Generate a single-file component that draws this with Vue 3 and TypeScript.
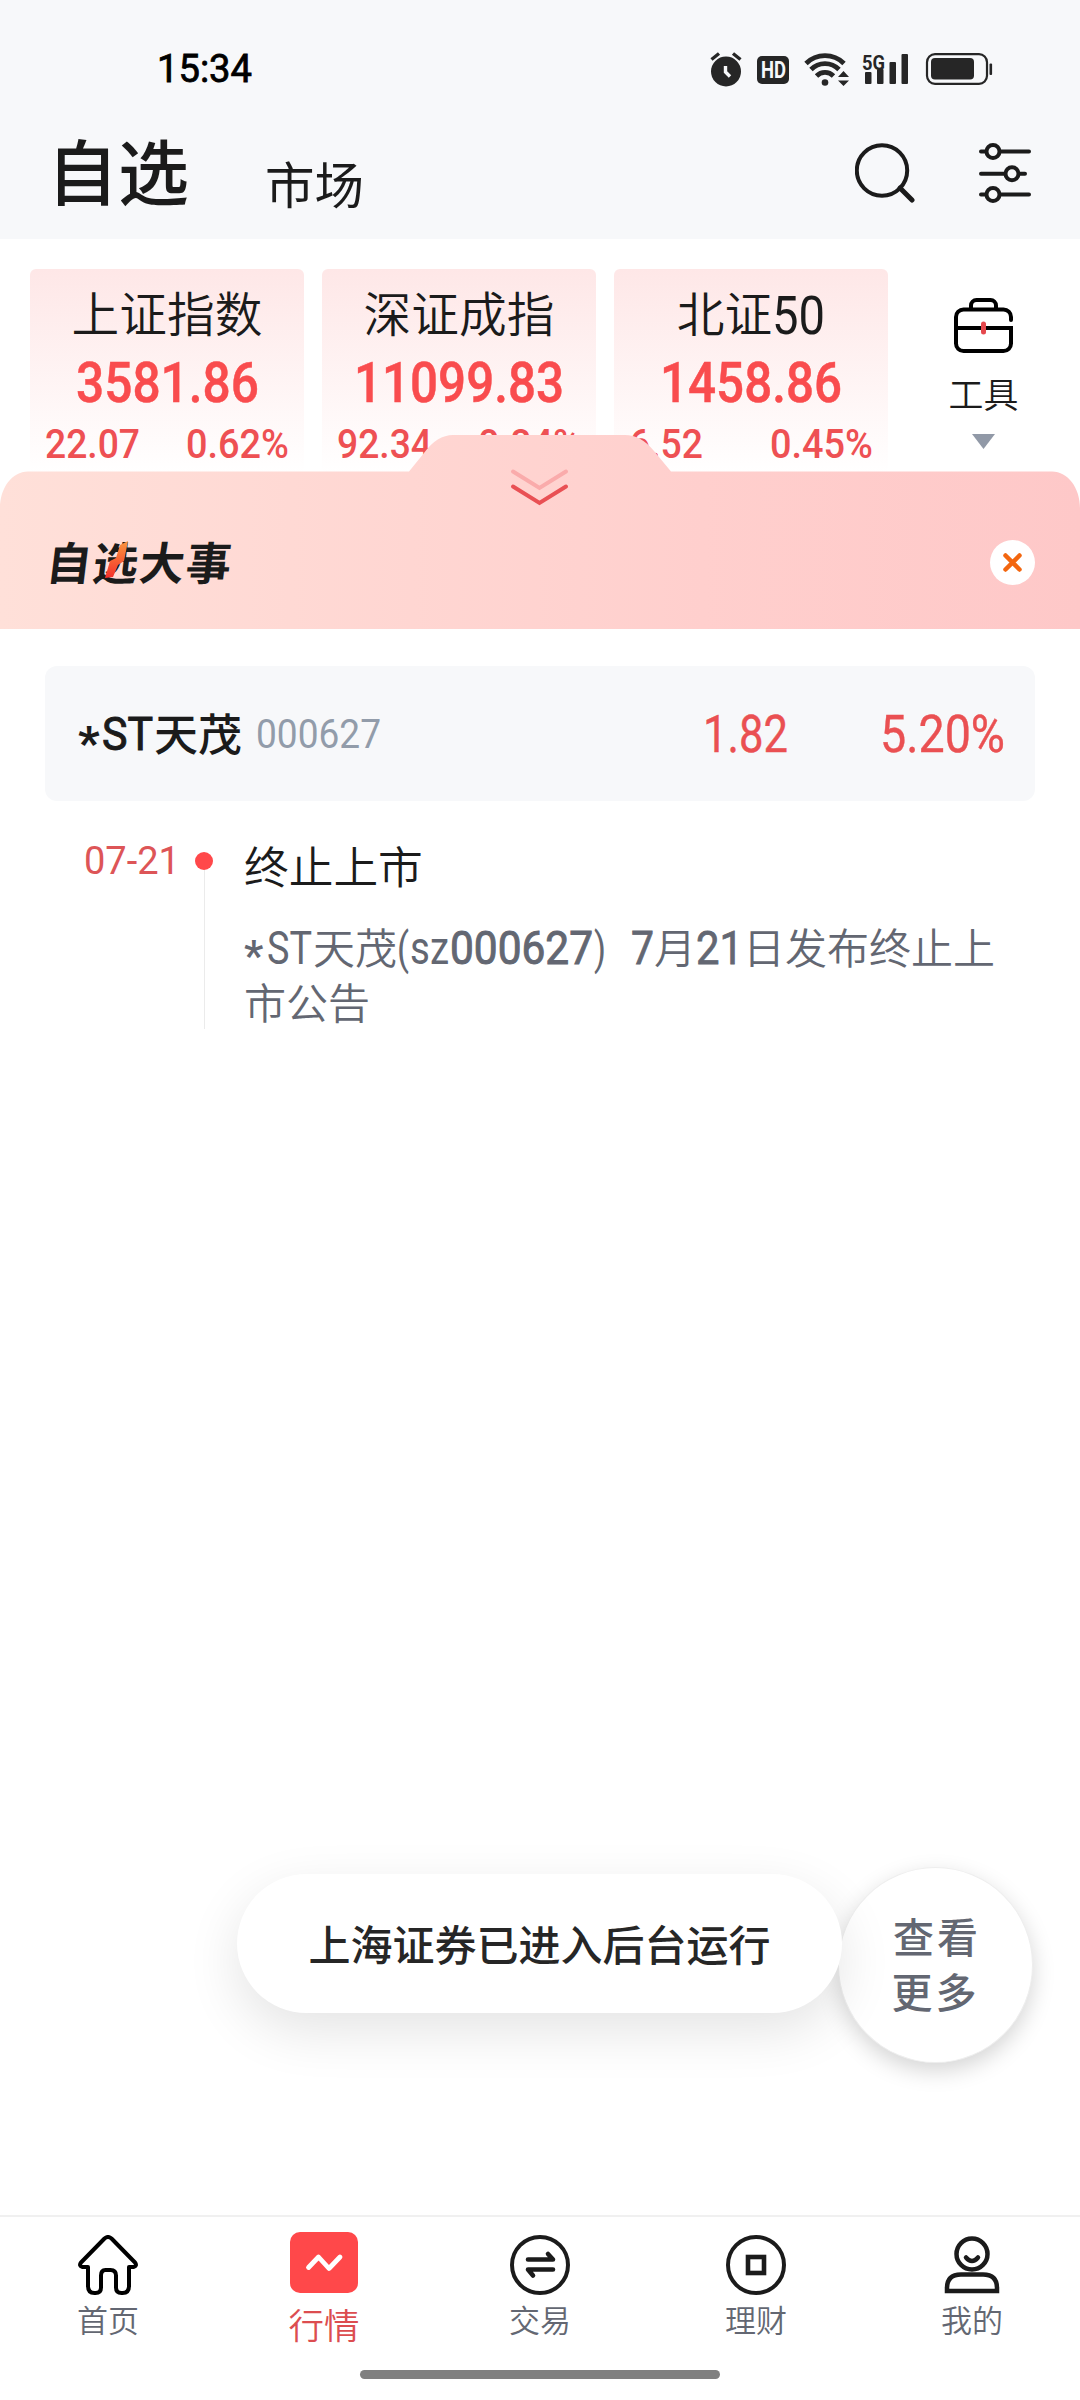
<script setup lang="ts">
import { h, type FunctionalComponent } from 'vue'

interface LatinProps {
  text: string
  width: number
  size: number
  weight?: number
  thicken?: number
}

// Condensed latin/digit run: the box is exactly as tall as the capitals.
const Latin: FunctionalComponent<LatinProps> = (p) => {
  const cap = Math.round(p.size * 0.711)
  return h(
    'svg',
    { width: p.width, height: cap, style: { overflow: 'visible', flex: 'none', display: 'inline-block' } },
    [
      h(
        'text',
        {
          x: 0,
          y: cap,
          fill: 'currentColor',
          stroke: 'currentColor',
          'stroke-width': p.thicken ?? 0,
          'font-family': 'Roboto, sans-serif',
          'font-size': p.size,
          'font-weight': p.weight ?? 400,
          textLength: p.width,
          lengthAdjust: 'spacingAndGlyphs',
        },
        p.text,
      ),
    ],
  )
}
Latin.props = ['text', 'width', 'size', 'weight', 'thicken']

interface IndexCard {
  name: string
  suffix: string
  price: string
  priceWidth: number
  change: string
  changeWidth: number
  percent: string
}

const cards: IndexCard[] = [
  { name: '上证指数', suffix: '', price: '3581.86', priceWidth: 183, change: '22.07', changeWidth: 95, percent: '0.62%' },
  { name: '深证成指', suffix: '', price: '11099.83', priceWidth: 210, change: '92.34', changeWidth: 95, percent: '0.84%' },
  { name: '北证', suffix: '50', price: '1458.86', priceWidth: 182, change: '6.52', changeWidth: 74, percent: '0.45%' },
]

const tabs = ['首页', '行情', '交易', '理财', '我的']
const activeTab = 1
</script>

<template>
  <div class="screen">
    <header class="top">
      <div class="status">
        <Latin text="15:34" :width="95" :size="38" :thicken="0.8" />
        <div class="status-icons">
          <svg width="32" height="36" viewBox="0 0 32 36">
            <circle cx="16" cy="20.5" r="15" fill="#262626" />
            <path d="M1.500 8.500L9 2.500M30.500 8.500L23 2.500" stroke="#262626" stroke-width="3.400" />
            <path d="M15.500 15v6l4.500 4.500" fill="none" stroke="#f7f8fa" stroke-width="3.400" />
          </svg>
          <div class="hd"><Latin text="HD" :width="25" :size="23" :weight="700" /></div>
          <svg width="46" height="36" viewBox="0 0 46 36" fill="none" stroke="#262626">
            <path d="M2 12.500a27 27 0 0 1 38 0M7 18.500a19.500 19.500 0 0 1 28 0M12.500 25a12 12 0 0 1 17 0" stroke-width="4.800" />
            <circle cx="21" cy="31.500" r="3.300" fill="#262626" stroke="none" />
            <path d="M34 26l5.500-6 5.500 6zM34 29.500l5.500 5.500 5.500-5.500z" fill="#262626" stroke="none" />
          </svg>
          <div class="signal">
            <span class="net"><Latin text="5G" :width="23" :size="21" :weight="700" /></span>
            <svg width="47" height="34" viewBox="0 0 47 34" fill="#262626">
              <rect x="3" y="22" width="6.500" height="12" rx="1" />
              <rect x="15" y="19" width="6.500" height="15" rx="1" />
              <rect x="27.500" y="12" width="6.500" height="22" rx="1" />
              <rect x="39.500" y="4" width="6.500" height="30" rx="1" />
            </svg>
          </div>
          <svg width="68" height="32" viewBox="0 0 68 32">
            <rect x="2" y="1.200" width="60" height="29.600" rx="8" fill="none" stroke="#262626" stroke-width="2.200" />
            <rect x="6" y="5" width="43" height="21.500" rx="4" fill="#262626" />
            <rect x="64.500" y="10.500" width="2.600" height="11.500" rx="1" fill="#262626" />
          </svg>
        </div>
      </div>
      <div class="heading">
        <span class="heading-on">自选</span>
        <span class="heading-off">市场</span>
        <svg class="search" width="60" height="60" viewBox="0 0 60 60" fill="none" stroke="#1b1b1b" stroke-width="4">
          <circle cx="27" cy="27.500" r="25.200" />
          <path d="M45 45l12 12" stroke-width="5" stroke-linecap="round" />
        </svg>
        <svg width="52" height="60" viewBox="0 0 52 60" fill="#f7f8fa" stroke="#1b1b1b" stroke-width="4" stroke-linecap="round">
          <path d="M2 8.500h48M2 30.700h44M2 51.500h48" />
          <circle cx="14" cy="8.500" r="6.500" />
          <circle cx="33" cy="30.700" r="6.500" />
          <circle cx="14" cy="51.500" r="6.500" />
        </svg>
      </div>
    </header>

    <section class="indices">
      <article v-for="c in cards" :key="c.name" class="card">
        <div class="card-name">
          {{ c.name }}<Latin v-if="c.suffix" class="suffix" :text="c.suffix" :width="53" :size="54" />
        </div>
        <div class="card-price"><Latin :text="c.price" :width="c.priceWidth" :size="56" :weight="500" :thicken="0.5" /></div>
        <div class="card-change">
          <Latin :text="c.change" :width="c.changeWidth" :size="41" :weight="500" />
          <Latin :text="c.percent" :width="103" :size="41" :weight="500" />
        </div>
      </article>
      <div class="tools">
        <svg width="60" height="56" viewBox="0 0 60 56" fill="none" stroke="#000" stroke-width="4">
          <path d="M17 11V7.500a5.500 5.500 0 0 1 5.500-5.500h14a5.500 5.500 0 0 1 5.500 5.500V11" />
          <path d="M57 22v-3a7.500 7.500 0 0 0-7.500-7.500H9.500A7.500 7.500 0 0 0 2 19v26.500A7.500 7.500 0 0 0 9.500 53H49.500a7.500 7.500 0 0 0 7.500-7.500V30H2" stroke-linecap="round" />
          <path d="M29.500 26v8" stroke="#e5484d" stroke-width="5" stroke-linecap="round" />
        </svg>
        <span>工具</span>
        <svg width="23" height="15" viewBox="0 0 23 15"><path d="M0 0h23L11.500 15z" fill="#9199a7" /></svg>
      </div>
    </section>

    <section class="panel">
      <svg class="panel-bg" width="1080" height="194" viewBox="0 0 1080 194">
        <defs>
          <linearGradient id="panelFill" x1="0" y1="0" x2="1" y2="0">
            <stop offset="0" stop-color="#ffe0d9" />
            <stop offset="0.650" stop-color="#ffcfcd" />
            <stop offset="1" stop-color="#fec8c8" />
          </linearGradient>
        </defs>
        <path
          d="M0 73C0 53 12 36.500 28 36.500H409L424 18Q437 0 453 0H625Q641 0 654 16L671 36.500H1052C1068 36.500 1080 53 1080 73V194H0z"
          fill="url(#panelFill)"
        />
        <g fill="none" stroke-width="4" stroke-linecap="round">
          <path d="M513 36.500l26.500 16.500L566 36.500" stroke="#faabab" />
          <path d="M513 51.500l26.500 16.500L566 51.500" stroke="#e95054" />
        </g>
      </svg>
      <div class="panel-head">
        <div class="panel-title">
          <span>自选大事</span>
          <svg class="bolt" width="25" height="38" viewBox="0 0 25 38">
            <defs>
              <linearGradient id="boltFill" x1="0" y1="0" x2="0" y2="1">
                <stop offset="0" stop-color="#f9963f" />
                <stop offset="1" stop-color="#f5302b" />
              </linearGradient>
            </defs>
            <path d="M23 0L15 4L11 17L5 20L0 37L8 36L13 24L19 20Z" fill="url(#boltFill)" />
          </svg>
        </div>
        <svg width="45" height="45" viewBox="0 0 45 45">
          <circle cx="22.500" cy="22.500" r="22.500" fill="#fff" />
          <path d="M15.500 15.500l14 14M29.500 15.500l-14 14" stroke="#f3660f" stroke-width="4.500" stroke-linecap="round" />
        </svg>
      </div>
    </section>

    <main class="content">
      <div class="stock">
        <span class="star">*</span>
        <Latin text="ST" :width="51" :size="46" :thicken="1" />
        <span class="stock-name">天茂</span>
        <Latin class="code" text="000627" :width="125" :size="41" />
        <Latin class="last" text="1.82" :width="85" :size="51" :thicken="0.4" />
        <Latin class="pct" text="5.20%" :width="125" :size="51" :thicken="0.4" />
      </div>

      <div class="event">
        <div class="date"><Latin text="07-21" :width="96" :size="38" /></div>
        <div class="rail"><i /></div>
        <div class="body">
          <div class="event-title">终止上市</div>
          <div class="event-text">
            <span class="star small">*</span><Latin class="tight" text="ST" :width="45" :size="46" />天茂<Latin
              class="tight"
              text="("
              :width="12"
              :size="44"
            /><Latin class="tight" text="sz" :width="39" :size="47" /><Latin
              class="tight"
              text="000627"
              :width="143"
              :size="47"
              :thicken="1"
            /><Latin text=")" :width="12" :size="44" /><span class="gap" /><Latin
              text="7"
              :width="23"
              :size="47"
              :thicken="0.8"
            />月<Latin text="21" :width="47" :size="47" :thicken="0.8" />日发布终止上<br />市公告
          </div>
        </div>
      </div>

      <div class="more">查看<br />更多</div>
      <div class="toast">上海证券已进入后台运行</div>
    </main>

    <nav class="tabs">
      <div v-for="(t, i) in tabs" :key="t" class="tab" :class="{ on: i === activeTab }">
        <svg v-if="i === 0" width="60" height="60" viewBox="0 0 60 60" fill="none" stroke="#000" stroke-width="4" stroke-linejoin="round">
          <path
            d="M10 32H4.500Q0.500 31 3 27.500L26.500 3.500Q30 0.500 33.500 3.500L57 27.500Q59.500 31 55.500 32H51V51Q51 58 44.500 58H43.500Q38 58 38 52.500V40.500Q38 35 32.500 35H27.500Q23 35 23 40.500V52.500Q23 58 17.500 58H16.500Q10 58 10 51Z"
          />
        </svg>
        <svg v-else-if="i === 1" width="68" height="61" viewBox="0 0 68 61">
          <rect width="68" height="61" rx="10" fill="#ff484a" />
          <path d="M18.500 35.500L28.500 25L39 36.500L50 25" fill="none" stroke="#fff" stroke-width="4.800" stroke-linecap="round" stroke-linejoin="round" />
        </svg>
        <svg v-else-if="i === 2" width="60" height="60" viewBox="0 0 60 60" fill="none" stroke="#1b1b1b" stroke-width="4">
          <circle cx="30" cy="30" r="28" />
          <path d="M18 24.500H43L38 19M43 34.500H18L23 40.500" stroke-width="4.600" stroke-linecap="round" stroke-linejoin="round" />
        </svg>
        <svg v-else-if="i === 3" width="60" height="60" viewBox="0 0 60 60" fill="none" stroke="#1b1b1b" stroke-width="4">
          <circle cx="30" cy="30" r="28" />
          <rect x="22" y="22" width="16" height="16" stroke-width="4.600" />
        </svg>
        <svg v-else width="60" height="60" viewBox="0 0 60 60" fill="none" stroke="#1b1b1b" stroke-width="4.500">
          <circle cx="30" cy="19" r="15.500" />
          <path d="M24 22.500q6 7 12 0" stroke-linecap="round" />
          <path d="M5 56V53C5 44 10 39.500 19 39.500H41C50 39.500 55 44 55 53V56Z" />
        </svg>
        <span>{{ t }}</span>
      </div>
      <div class="home-bar" />
    </nav>
  </div>
</template>

<style>
body {
  background: #fff;
}
</style>

<style scoped>
.screen {
  width: 1080px;
  height: 2400px;
  display: flex;
  flex-direction: column;
  overflow: hidden;
  background: #fff;
  color: #1b1b1b;
  font-family: 'Noto Sans CJK SC', sans-serif;
}
.screen > * {
  box-sizing: border-box;
  flex: none;
}
.screen svg {
  display: block;
  flex: none;
}
.top {
  height: 239px;
  background: #f7f8fa;
}
.status {
  height: 137px;
  box-sizing: border-box;
  padding: 0 87px 0 157px;
  display: flex;
  align-items: center;
  justify-content: space-between;
  color: #000;
}
.status-icons {
  display: flex;
  align-items: center;
  color: #262626;
}
.status-icons > :nth-child(1) {
  margin-right: 15px;
}
.hd {
  width: 32px;
  height: 28px;
  margin: 3px 15px 0 0;
  border-radius: 5px;
  background: #262626;
  color: #f7f8fa;
  display: flex;
  align-items: center;
  justify-content: center;
}
.signal {
  position: relative;
  margin: 0 16px 3px 12px;
}
.net {
  position: absolute;
  left: 0;
  top: 1px;
}
.net svg {
  display: block;
}
.heading {
  display: flex;
  align-items: center;
  height: 72px;
  padding: 0 49px 0 47px;
}
.heading-on {
  font-size: 71px;
  font-weight: 500;
  line-height: 72px;
  margin-top: -10px;
}
.heading-off {
  font-size: 49.500px;
  line-height: 60px;
  margin: 19px 0 0 76px;
}
.search {
  margin-left: auto;
  margin-right: 64px;
}
.indices {
  height: 196px;
  padding: 30px 0 0 30px;
  display: flex;
  gap: 18px;
}
.card {
  width: 274px;
  height: 204px;
  box-sizing: border-box;
  border-radius: 6px;
  padding: 17px 15px 0 15px;
  background: linear-gradient(#fee7e7, #fff);
  color: #f94c4e;
}
.card-name {
  height: 52px;
  line-height: 52px;
  font-size: 47.700px;
  font-weight: 350;
  color: #1b1b1b;
  display: flex;
  justify-content: center;
  align-items: center;
}
.suffix {
  margin-top: 5px;
}
.card-price {
  height: 40px;
  margin-top: 24px;
  display: flex;
  justify-content: center;
}
.card-change {
  margin-top: 27px;
  display: flex;
  justify-content: space-between;
  color: #ee5053;
}
.tools {
  flex: 1;
  display: flex;
  flex-direction: column;
  align-items: center;
  padding: 29px 19px 0 0;
}
.tools span {
  font-size: 35px;
  line-height: 40px;
  margin: 19px 0 21px;
  font-weight: 350;
}
.panel {
  position: relative;
  height: 194px;
  z-index: 1;
}
.panel-bg {
  position: absolute;
  inset: 0;
}
.panel-head {
  position: relative;
  height: 194px;
  box-sizing: border-box;
  padding: 61px 45px 0 47px;
  display: flex;
  justify-content: space-between;
  align-items: center;
}
.panel-title {
  position: relative;
  margin-top: -4px;
}
.panel-title span {
  display: block;
  font-size: 45px;
  line-height: 50px;
  font-weight: 700;
  letter-spacing: 1.500px;
  transform: skewX(-7deg);
}
.bolt {
  position: absolute;
  left: 58px;
  top: 5px;
}
.content {
  position: relative;
  height: 1586px;
  padding: 37px 45px 0;
}
.stock {
  height: 135px;
  border-radius: 12px;
  background: #f7f8fa;
  padding-left: 33px;
  display: flex;
  align-items: center;
  position: relative;
}
.star {
  font-family: Roboto, sans-serif;
  font-size: 47px;
  line-height: 50px;
  font-weight: 800;
  width: 24px;
  position: relative;
  top: 9px;
}
.stock-name {
  font-size: 44px;
  line-height: 50px;
  font-weight: 500;
  margin: -4px 14px 0 1px;
}
.code {
  color: #929caa;
}
.last {
  color: #ea5052;
  margin-left: auto;
}
.pct {
  color: #ea5052;
  margin: 0 30px 0 92px;
}
.event {
  display: flex;
  padding-top: 38px;
}
.date {
  width: 150px;
  box-sizing: border-box;
  padding: 8px 0 0 39px;
  color: #dd5557;
}
.rail {
  width: 18px;
  height: 177px;
  margin-top: 13px;
  display: flex;
  justify-content: center;
  background: linear-gradient(#ebebeb, #ebebeb) center / 1px 100% no-repeat;
}
.rail i {
  width: 18px;
  height: 18px;
  border-radius: 50%;
  background: #ff484a;
}
.body {
  padding-left: 31px;
}
.event-title {
  font-size: 44.700px;
  line-height: 56px;
  margin-top: -2px;
  font-weight: 350;
}
.event-text {
  margin-top: 25px;
  font-size: 42px;
  line-height: 55px;
  color: #636772;
  font-weight: 350;
  white-space: nowrap;
}
.event-text svg {
  display: inline-block;
  vertical-align: baseline;
}
.event-text .tight {
  margin-right: 1px;
}
.star.small {
  display: inline-block;
  font-size: 43px;
  font-weight: 600;
  width: 23px;
  line-height: 40px;
  top: 6px;
}
.gap {
  display: inline-block;
  width: 25px;
}
.toast {
  position: absolute;
  left: 237px;
  top: 1245px;
  width: 605px;
  height: 139px;
  border-radius: 70px;
  background: #fff;
  box-shadow: 0 18px 54px rgba(0, 0, 0, 0.11);
  color: #262626;
  font-size: 42px;
  line-height: 138px;
  text-align: center;
  font-weight: 500;
}
.more {
  position: absolute;
  left: 838px;
  top: 1238px;
  width: 195px;
  height: 196px;
  box-sizing: border-box;
  padding-top: 40px;
  border-radius: 50%;
  background: #fff;
  border: 1px solid #eee;
  box-shadow: 0 8px 22px rgba(0, 0, 0, 0.17);
  color: #636772;
  font-size: 41px;
  line-height: 54.500px;
  letter-spacing: 3px;
  text-indent: 3px;
  text-align: center;
  font-weight: 500;
}
.tabs {
  position: relative;
  height: 185px;
  border-top: 2px solid #f0f0f0;
  display: flex;
}
.tab {
  flex: 1;
  display: flex;
  flex-direction: column;
  align-items: center;
  padding-top: 18px;
  font-size: 31px;
  line-height: 40px;
  color: #636772;
  font-weight: 350;
}
.tab span {
  margin-top: 4px;
}
.tab.on {
  padding-top: 15px;
  font-size: 35.500px;
  color: #dc4d50;
}
.tab.on span {
  margin-top: 11px;
}
.home-bar {
  position: absolute;
  left: 360px;
  top: 153px;
  width: 360px;
  height: 9px;
  border-radius: 5px;
  background: #808080;
}
</style>
